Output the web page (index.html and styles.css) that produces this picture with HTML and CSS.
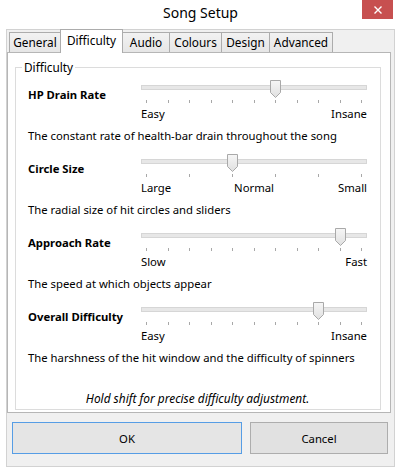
FILE: index.html
```html
<!DOCTYPE html>
<html>
<head>
<meta charset="utf-8">
<link rel="stylesheet" href="styles.css">
</head>
<body>
<div class="window">
  <div class="titlebar">
    <span></span>
    <div class="title">Song Setup</div>
    <button class="close" aria-label="Close">
      <svg width="8" height="8" viewBox="0 0 8 8"><path d="M0.5 0.5 L7.5 7.5 M7.5 0.5 L0.5 7.5" stroke="#fff" stroke-width="1.4" fill="none"/></svg>
    </button>
  </div>
  <div class="client">
    <div class="tabs">
      <div class="tab w-general">General</div>
      <div class="tab active w-difficulty">Difficulty</div>
      <div class="tab w-audio">Audio</div>
      <div class="tab w-colours">Colours</div>
      <div class="tab w-design">Design</div>
      <div class="tab w-advanced">Advanced</div>
    </div>
    <div class="tabpage">
      <fieldset class="group">
        <legend>Difficulty</legend>

        <div class="setting">
          <div class="head">
            <div class="label">HP Drain Rate</div>
            <div class="slider">
              <div class="track-area">
                <div class="track"></div>
                <svg class="thumb" style="left:129px" width="11" height="18" viewBox="0 0 11 18"><defs><linearGradient id="g1" x1="0" x2="0" y1="0" y2="1"><stop offset="0" stop-color="#f6f6f6"/><stop offset="1" stop-color="#e0e0e0"/></linearGradient></defs><path d="M0.5 0.5 H10.5 V12.5 L5.5 17.5 L0.5 12.5 Z" fill="url(#g1)" stroke="#a9a9a9"/></svg>
              </div>
              <div class="ticks"><i></i><i></i><i></i><i></i><i></i><i></i><i></i><i></i><i></i><i></i><i></i></div>
              <div class="ends"><span>Easy</span><span></span><span class="r">Insane</span></div>
            </div>
          </div>
          <p class="desc">The constant rate of health-bar drain throughout the song</p>
        </div>

        <div class="setting">
          <div class="head">
            <div class="label">Circle Size</div>
            <div class="slider">
              <div class="track-area">
                <div class="track"></div>
                <svg class="thumb" style="left:86px" width="11" height="18" viewBox="0 0 11 18"><path d="M0.5 0.5 H10.5 V12.5 L5.5 17.5 L0.5 12.5 Z" fill="url(#g1)" stroke="#a9a9a9"/></svg>
              </div>
              <div class="ticks"><i></i><i></i><i></i><i></i><i></i><i></i></div>
              <div class="ends"><span>Large</span><span class="c">Normal</span><span class="r">Small</span></div>
            </div>
          </div>
          <p class="desc">The radial size of hit circles and sliders</p>
        </div>

        <div class="setting">
          <div class="head">
            <div class="label">Approach Rate</div>
            <div class="slider">
              <div class="track-area">
                <div class="track"></div>
                <svg class="thumb" style="left:193.5px" width="11" height="18" viewBox="0 0 11 18"><path d="M0.5 0.5 H10.5 V12.5 L5.5 17.5 L0.5 12.5 Z" fill="url(#g1)" stroke="#a9a9a9"/></svg>
              </div>
              <div class="ticks"><i></i><i></i><i></i><i></i><i></i><i></i><i></i><i></i><i></i><i></i><i></i></div>
              <div class="ends"><span>Slow</span><span></span><span class="r">Fast</span></div>
            </div>
          </div>
          <p class="desc">The speed at which objects appear</p>
        </div>

        <div class="setting">
          <div class="head">
            <div class="label">Overall Difficulty</div>
            <div class="slider">
              <div class="track-area">
                <div class="track"></div>
                <svg class="thumb" style="left:172px" width="11" height="18" viewBox="0 0 11 18"><path d="M0.5 0.5 H10.5 V12.5 L5.5 17.5 L0.5 12.5 Z" fill="url(#g1)" stroke="#a9a9a9"/></svg>
              </div>
              <div class="ticks"><i></i><i></i><i></i><i></i><i></i><i></i><i></i><i></i><i></i><i></i><i></i></div>
              <div class="ends"><span>Easy</span><span></span><span class="r">Insane</span></div>
            </div>
          </div>
          <p class="desc">The harshness of the hit window and the difficulty of spinners</p>
        </div>

        <p class="hint">Hold shift for precise difficulty adjustment.</p>
      </fieldset>
    </div>
    <div class="buttons">
      <button class="btn btn-ok">OK</button>
      <button class="btn btn-cancel">Cancel</button>
    </div>
  </div>
</div>
</body>
</html>
```
FILE: styles.css
```css
* { box-sizing: border-box; }
html, body { margin: 0; padding: 0; background: #ffffff; }
body {
  font-family: "Noto Sans", "Open Sans", sans-serif;
  font-size: 11.3px;
  color: #000;
}
.window { width: 401px; height: 467px; background: #ffffff; }

.titlebar {
  height: 29px;
  display: grid;
  grid-template-columns: 1fr auto 1fr;
  align-items: start;
}
.title {
  font-size: 14px;
  line-height: 26px;
  color: #000;
}
.close {
  justify-self: end;
  width: 31px;
  height: 19px;
  margin: 0 8px 0 0;
  padding: 0;
  border: 0;
  background: #c75050;
  display: flex;
  align-items: center;
  justify-content: center;
}

.client {
  margin-left: 6px;
  width: 389px;
  height: 438px;
  border: 1px solid #d2d2d2;
  background: #f0f0f0;
}

.tabs {
  display: flex;
  align-items: flex-end;
  height: 22px;
  padding-left: 2px;
}
.tab {
  height: 20px;
  border: 1px solid #acacac;
  border-bottom: 0;
  background: linear-gradient(#f2f2f2, #e6e6e6);
  margin-left: -1px;
  text-align: center;
  line-height: 19px;
  white-space: nowrap;
  font-size: 11.8px;
}
.tab:first-child { margin-left: 0; }
.tab.active {
  height: 24px;
  margin-top: -1px;
  margin-bottom: -1px;
  background: #ffffff;
  line-height: 21px;
  position: relative;
  z-index: 1;
}
.w-general { width: 52px; }
.w-difficulty { width: 63px; }
.w-audio { width: 48px; }
.w-colours { width: 53px; }
.w-design { width: 49px; }
.w-advanced { width: 64px; }

.tabpage {
  width: 384px;
  height: 361px;
  border: 1px solid #b6b6b6;
  background: #ffffff;
  padding: 6px 9px 2px 7px;
}

.group {
  margin: 0;
  width: 366px;
  height: 351px;
  border: 1px solid #dcdcdc;
  padding: 0 13px 0 12px;
}
.group legend {
  padding: 0 2px;
  margin-left: -6px;
  line-height: 16px;
  font-size: 11.8px;
}

.setting { margin-top: 8px; }
.setting:first-of-type { margin-top: 3px; }
.head {
  display: grid;
  grid-template-columns: 113px 226px;
}
.label {
  font-weight: bold;
  line-height: 16px;
  margin-top: 9px;
  white-space: nowrap;
}
.slider { display: flex; flex-direction: column; }
.track-area { height: 22px; position: relative; }
.track {
  margin-top: 7px;
  height: 5px;
  border: 1px solid #d6d6d6;
  background: #e7e7e7;
}
.thumb { position: absolute; top: 2px; display: block; }
.ticks {
  height: 3px;
  padding: 0 5px;
  display: flex;
  justify-content: space-between;
}
.ticks i { width: 1px; height: 3px; background: #a8a8a8; }
.ends {
  margin-top: 3px;
  line-height: 16px;
  display: grid;
  grid-template-columns: 1fr auto 1fr;
}
.ends .c { text-align: center; }
.ends .r { text-align: right; }
.desc {
  margin: 6px 0 0;
  line-height: 16px;
  white-space: nowrap;
}
.hint {
  margin: 24px 0 0;
  line-height: 16px;
  text-align: center;
  font-style: italic;
  font-size: 11.9px;
}

.buttons {
  display: flex;
  gap: 8px;
  padding-left: 5px;
  margin-top: 9px;
}
.btn {
  height: 32px;
  font-family: inherit;
  font-size: 11.3px;
  color: #000;
  background: #e1e1e1;
  border: 1px solid #adadad;
  padding: 0;
}
.btn-ok { width: 230px; border-color: #569de5; background: #e5e5e5; }
.btn-cancel { width: 138px; }
```
